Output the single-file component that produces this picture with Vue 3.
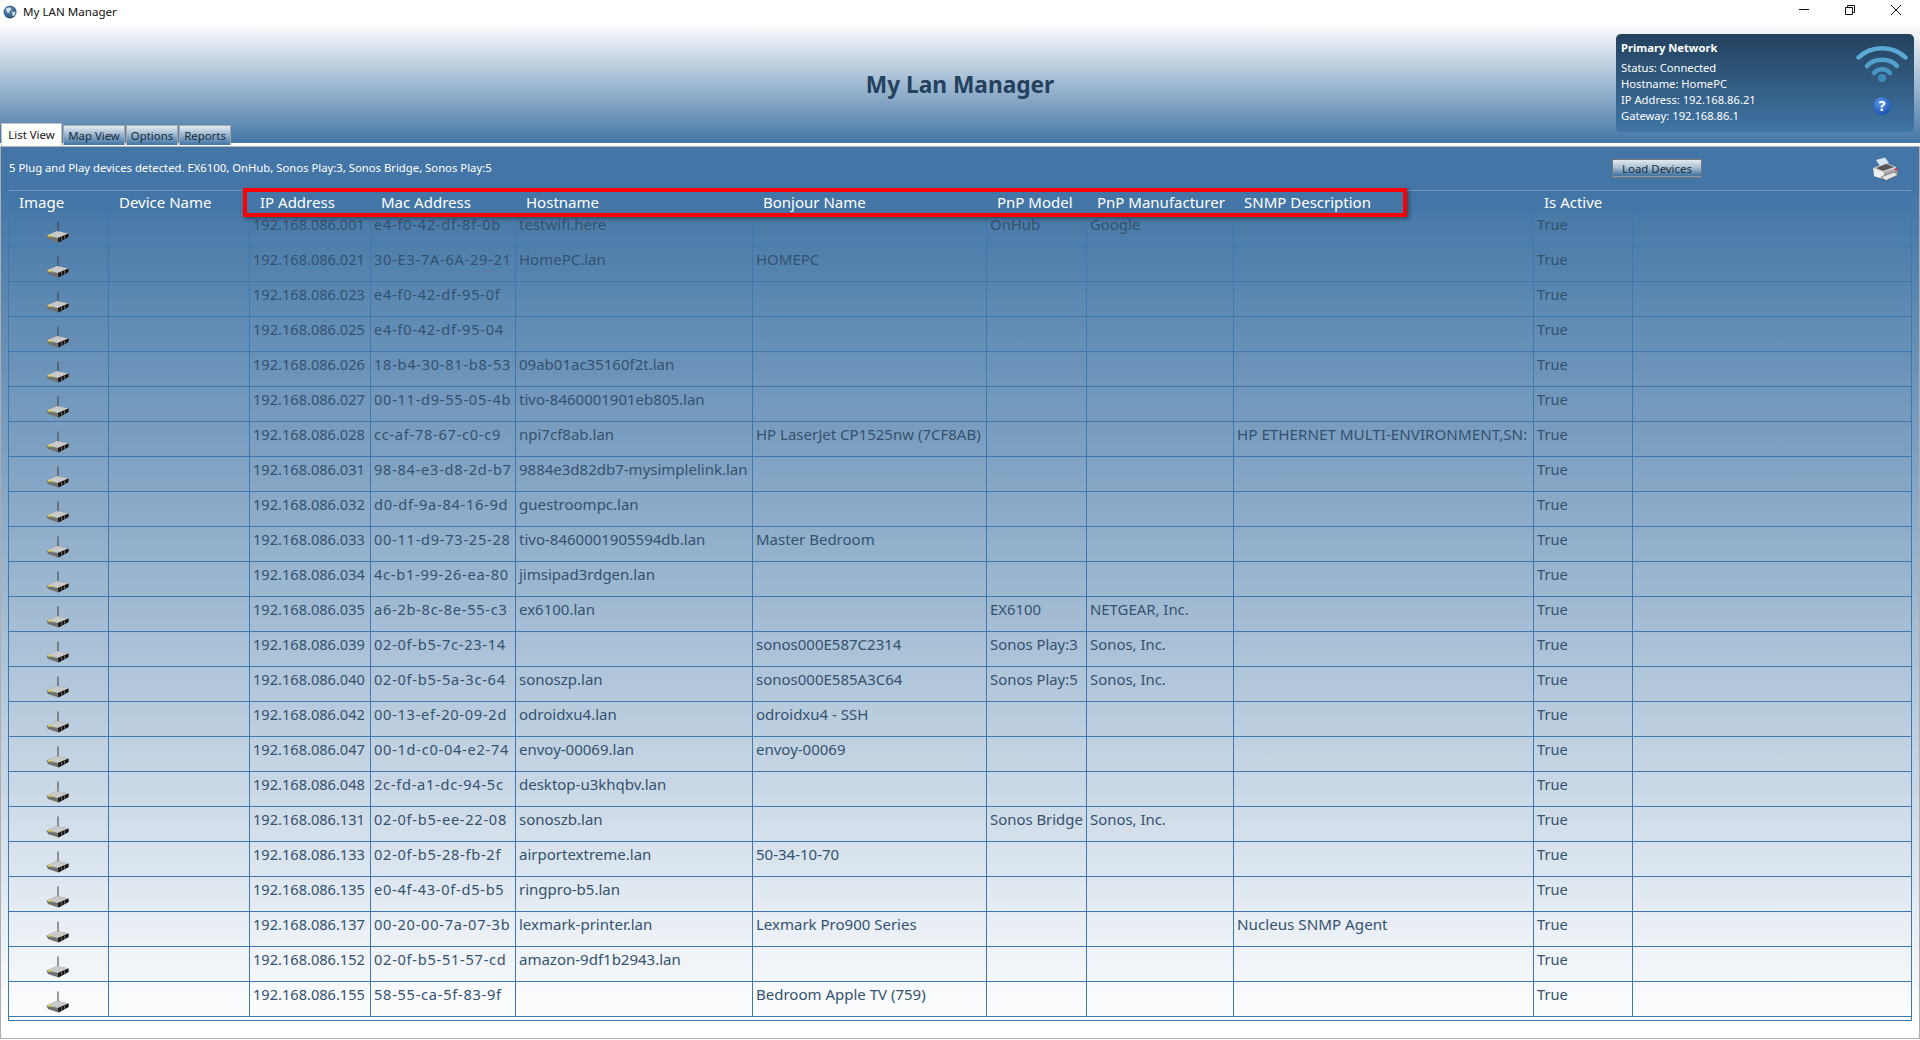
<script setup>
const columns = ['Image', 'Device Name', 'IP Address', 'Mac Address', 'Hostname', 'Bonjour Name', 'PnP Model', 'PnP Manufacturer', 'SNMP Description', 'Is Active', '']
const tabs = ['Map View', 'Options', 'Reports']
const devices = [
  ['192.168.086.001', 'e4-f0-42-df-8f-0b', 'testwifi.here', '', 'OnHub', 'Google', ''],
  ['192.168.086.021', '30-E3-7A-6A-29-21', 'HomePC.lan', 'HOMEPC', '', '', ''],
  ['192.168.086.023', 'e4-f0-42-df-95-0f', '', '', '', '', ''],
  ['192.168.086.025', 'e4-f0-42-df-95-04', '', '', '', '', ''],
  ['192.168.086.026', '18-b4-30-81-b8-53', '09ab01ac35160f2t.lan', '', '', '', ''],
  ['192.168.086.027', '00-11-d9-55-05-4b', 'tivo-8460001901eb805.lan', '', '', '', ''],
  ['192.168.086.028', 'cc-af-78-67-c0-c9', 'npi7cf8ab.lan', 'HP LaserJet CP1525nw (7CF8AB)', '', '', 'HP ETHERNET MULTI-ENVIRONMENT,SN:'],
  ['192.168.086.031', '98-84-e3-d8-2d-b7', '9884e3d82db7-mysimplelink.lan', '', '', '', ''],
  ['192.168.086.032', 'd0-df-9a-84-16-9d', 'guestroompc.lan', '', '', '', ''],
  ['192.168.086.033', '00-11-d9-73-25-28', 'tivo-8460001905594db.lan', 'Master Bedroom', '', '', ''],
  ['192.168.086.034', '4c-b1-99-26-ea-80', 'jimsipad3rdgen.lan', '', '', '', ''],
  ['192.168.086.035', 'a6-2b-8c-8e-55-c3', 'ex6100.lan', '', 'EX6100', 'NETGEAR, Inc.', ''],
  ['192.168.086.039', '02-0f-b5-7c-23-14', '', 'sonos000E587C2314', 'Sonos Play:3', 'Sonos, Inc.', ''],
  ['192.168.086.040', '02-0f-b5-5a-3c-64', 'sonoszp.lan', 'sonos000E585A3C64', 'Sonos Play:5', 'Sonos, Inc.', ''],
  ['192.168.086.042', '00-13-ef-20-09-2d', 'odroidxu4.lan', 'odroidxu4 - SSH', '', '', ''],
  ['192.168.086.047', '00-1d-c0-04-e2-74', 'envoy-00069.lan', 'envoy-00069', '', '', ''],
  ['192.168.086.048', '2c-fd-a1-dc-94-5c', 'desktop-u3khqbv.lan', '', '', '', ''],
  ['192.168.086.131', '02-0f-b5-ee-22-08', 'sonoszb.lan', '', 'Sonos Bridge', 'Sonos, Inc.', ''],
  ['192.168.086.133', '02-0f-b5-28-fb-2f', 'airportextreme.lan', '50-34-10-70', '', '', ''],
  ['192.168.086.135', 'e0-4f-43-0f-d5-b5', 'ringpro-b5.lan', '', '', '', ''],
  ['192.168.086.137', '00-20-00-7a-07-3b', 'lexmark-printer.lan', 'Lexmark Pro900 Series', '', '', 'Nucleus SNMP Agent'],
  ['192.168.086.152', '02-0f-b5-51-57-cd', 'amazon-9df1b2943.lan', '', '', '', ''],
  ['192.168.086.155', '58-55-ca-5f-83-9f', '', 'Bedroom Apple TV (759)', '', '', '']
]
const dataClass = ['ip', 'mac', 'host', 'host', 'name', 'name', 'text']
</script>

<template>
  <div class="app">
    <div class="titlebar">
      <svg class="globe" width="14" height="14" viewBox="0 0 14 14">
        <defs>
          <radialGradient id="gl" cx="0.4" cy="0.35" r="0.7">
            <stop offset="0" stop-color="#6f9fc8" />
            <stop offset="1" stop-color="#1f4468" />
          </radialGradient>
        </defs>
        <circle cx="7" cy="7" r="6.5" fill="url(#gl)" />
        <path d="M3 3.5 L7 2.5 L8.5 4.5 L6 6 L6.5 8 L4 7 Z" fill="#dfe8ef" />
        <path d="M9 7 L12.5 6.5 L12 10 L9.5 11.5 Z" fill="#cfdbe5" />
      </svg>
      <span class="apptitle">My LAN Manager</span>
      <div class="winctl">
        <svg width="12" height="12" viewBox="0 0 12 12"><path d="M1 5.5H11" stroke="#111" fill="none" /></svg>
        <svg width="12" height="12" viewBox="0 0 12 12"><path d="M1.5 3.5H8.5V10.5H1.5Z M3.5 3.5V1.5H10.5V8.5H8.5" stroke="#111" fill="none" /></svg>
        <svg width="12" height="12" viewBox="0 0 12 12"><path d="M1 1L11 11M11 1L1 11" stroke="#111" fill="none" /></svg>
      </div>
    </div>

    <header class="header">
      <nav class="tabs">
        <div class="tab active">List View</div>
        <div v-for="t in tabs" :key="t" class="tab">{{ t }}</div>
      </nav>
      <h1 class="title">My Lan Manager</h1>
      <section class="network">
        <div class="netinfo">
          <div class="nethead">Primary Network</div>
          <div>Status: Connected</div>
          <div>Hostname: HomePC</div>
          <div>IP Address: 192.168.86.21</div>
          <div>Gateway: 192.168.86.1</div>
        </div>
        <div class="neticons">
          <svg width="52" height="40" viewBox="0 0 52 40" fill="none" stroke-linecap="round">
            <path d="M2.5 14.5 C15 2 37 2 49.5 14.5" stroke="#5ba9d4" stroke-width="4.5" />
            <path d="M11 23 C18 14.5 34 14.5 41 23" stroke="#52a0cb" stroke-width="4.5" />
            <path d="M18 30 C22 25 30 25 34 30" stroke="#4795c1" stroke-width="4.5" />
            <circle cx="26" cy="35" r="4" fill="#3f8cb9" />
          </svg>
          <div class="help">?</div>
        </div>
      </section>
    </header>

    <main class="panel">
      <div class="statusrow">
        <span class="status">5 Plug and Play devices detected. EX6100, OnHub, Sonos Play:3, Sonos Bridge, Sonos Play:5</span>
        <button class="load">Load Devices</button>
        <svg class="printer" width="27" height="24" viewBox="0 0 27 24">
          <path d="M4 3 L13 0.5 L17 6 L8 9 Z" fill="#d4e6f7" />
          <path d="M1 11 L14 6 L24 10 L25 17 L12 22 L2 19 Z" fill="#d2d2d2" />
          <path d="M4 11 L14 7 L22 10 L11 14 Z" fill="#555" />
          <path d="M2 12 L11 15 L12 22 L2 19 Z" fill="#efefef" />
          <path d="M12 15 L25 11 L25.5 16 L12 21 Z" fill="#a9a9a9" />
          <path d="M9 20 L22 15 L26 18 L14 23.5 Z" fill="#e6e6e6" stroke="#555" stroke-width="0.6" />
          <circle cx="24" cy="12.5" r="1.2" fill="#e02020" />
        </svg>
      </div>

      <div class="grid">
        <div class="headrow">
          <div v-for="c in columns" :key="c" class="hcell">{{ c }}</div>
        </div>
        <div v-for="d in devices" :key="d[0]" class="row">
          <div class="cell iconcell">
            <svg width="24" height="23" viewBox="0 0 24 23">
              <path d="M12 0.5V11" stroke="#3f3f3f" fill="none" />
              <path d="M0.5 14.5 L11 10 L22.5 12.5 L22.5 16 L12.5 21.5 L2 18 Z" fill="#707070" />
              <path d="M0.5 14.5 L11 10 L22.5 12.5 L12 17 Z" fill="#c9c9c9" />
              <path d="M12 17 L22.5 12.5 L22.5 16 L12.5 21.5 Z" fill="#151515" />
              <path d="M15.5 15.8 L15.5 19.4 M18.5 14.5 L18.5 17.8" stroke="#6a6a6a" fill="none" />
              <rect x="2.5" y="13.8" width="2" height="2" fill="#eadb2a" />
              <rect x="5.5" y="15" width="1.6" height="1.6" fill="#7fb85a" />
            </svg>
          </div>
          <div class="cell"></div>
          <div v-for="(v, i) in d" :key="i" class="cell" :class="dataClass[i]">{{ v }}</div>
          <div class="cell ip">True</div>
          <div class="cell"></div>
        </div>
        <div class="highlight"></div>
      </div>
    </main>
  </div>
</template>

<style>
body { margin: 0; }
</style>

<style scoped>
.app {
  width: 1920px;
  height: 1040px;
  display: flex;
  flex-direction: column;
  overflow: hidden;
  background: #fff;
  font-family: "Noto Sans", "Open Sans", sans-serif;
}
.titlebar {
  height: 23px;
  flex: none;
  display: flex;
  align-items: center;
  padding-left: 3px;
  color: #111;
  font-size: 11.6px;
}
.globe { margin-right: 6px; }
.winctl {
  margin-left: auto;
  margin-right: 18px;
  display: flex;
  gap: 34px;
  margin-top: -4px;
}
.header {
  height: 123px;
  flex: none;
  box-sizing: border-box;
  display: grid;
  grid-template-columns: 1fr auto 1fr;
  background: linear-gradient(#fff 0%, #4376a6 100%);
  position: relative;
  border-bottom: 3px solid #fff;
  box-shadow: 0 1px 0 #b5b5b5;
}
.tabs {
  display: flex;
  align-items: flex-end;
  padding-left: 1px;
  gap: 1px;
  margin-bottom: -3px;
  align-self: end;
  position: relative;
  z-index: 1;
}
.tab {
  height: 20px;
  width: 52px;
  box-sizing: border-box;
  border: 1px solid #a8a8a8;
  border-bottom: none;
  margin-bottom: 1px;
  text-align: center;
  font-size: 11.4px;
  line-height: 19px;
  color: #1a2c3e;
  background: linear-gradient(#e6edf3, #3f73a4);
}
.tab:nth-child(2) { width: 62px; }
.tab.active {
  width: 61px;
  height: 23px;
  margin-bottom: 0;
  line-height: 21px;
  background: #fff;
  color: #111;
  border-color: #c0c0c0;
}
.title {
  margin: 2px 0 0;
  align-self: center;
  font-size: 22.7px;
  font-weight: 700;
  color: #24415e;
}
.network {
  justify-self: end;
  align-self: start;
  margin-top: 11px;
  margin-right: 6px;
  width: 298px;
  height: 98px;
  box-sizing: border-box;
  border-radius: 5px;
  background: linear-gradient(#23415d, #4075a5);
  color: #fff;
  font-size: 11.2px;
  line-height: 16px;
  padding: 6px 3px 0 5px;
  display: flex;
  justify-content: space-between;
}
.nethead {
  font-weight: 700;
  margin-bottom: 4px;
}
.neticons {
  display: flex;
  flex-direction: column;
  align-items: center;
  width: 58px;
  padding-top: 3px;
}
.help {
  width: 18px;
  height: 18px;
  margin-top: 14px;
  border-radius: 50%;
  background: radial-gradient(circle at 40% 30%, #5d96e6, #1b55b8 75%);
  color: #fff;
  font-weight: 700;
  font-size: 14px;
  line-height: 18px;
  text-align: center;
}
.panel {
  flex: 1;
  margin-bottom: 1px;
  box-sizing: border-box;
  border: 1px solid #adadad;
  border-top: none;
  padding: 0 7px;
  background: linear-gradient(#4376a6 0, #4376a6 44px, #fff 880px);
}
.statusrow {
  height: 44px;
  display: flex;
  align-items: center;
  padding-right: 13px;
  box-sizing: border-box;
}
.status {
  color: #fff;
  font-size: 11.3px;
  padding-left: 1px;
  margin-top: -1px;
}
.load {
  margin-left: auto;
  transform: translateX(1px);
  width: 90px;
  height: 19px;
  padding: 0;
  font-family: inherit;
  font-size: 11.4px;
  line-height: 16px;
  color: #1b2c3d;
  border: 1px solid #777;
  background: linear-gradient(#e3e9ef 0%, #a9bfd3 45%, #41749f 90%, #8fabc4 100%);
  margin-top: 1px;
}
.printer { margin-left: 171px; margin-top: 2px; }
.grid {
  position: relative;
  box-sizing: border-box;
  width: 1904px;
  height: 831px;
  border: 1px solid #3f78ae;
  border-top-color: #6d96be;
  --cols: 100px 141px 121px 145px 237px 234px 100px 147px 300px 99px 1fr;
}
.headrow {
  height: 21px;
  display: grid;
  grid-template-columns: var(--cols);
  background: #4376a6;
}
.hcell {
  color: #fff;
  font-size: 15px;
  line-height: 22px;
  padding-left: 10px;
  white-space: nowrap;
}
.row {
  height: 35px;
  box-sizing: border-box;
  display: grid;
  grid-template-columns: var(--cols);
  border-bottom: 1px solid #3f78ae;
}
.cell {
  min-width: 0;
  overflow: hidden;
  white-space: nowrap;
  box-sizing: border-box;
  border-right: 1px solid #3f78ae;
  padding: 2px 0 0 3px;
  font-size: 14.6px;
  line-height: 21px;
  color: #34526f;
}
.cell:last-child { border-right: none; }
.text { font-size: 15.2px; }
.host { font-size: 15px; }
.name { font-size: 14.9px; }
.mac { letter-spacing: 0.72px; }
.iconcell {
  padding: 9px 0 0 37px;
  line-height: 0;
}
.highlight {
  position: absolute;
  left: 234px;
  top: -3px;
  width: 1164px;
  height: 29px;
  box-sizing: border-box;
  border: 4px solid #f00;
  box-shadow: 2px 2px 4px rgba(0, 0, 0, 0.4);
  pointer-events: none;
}
</style>
